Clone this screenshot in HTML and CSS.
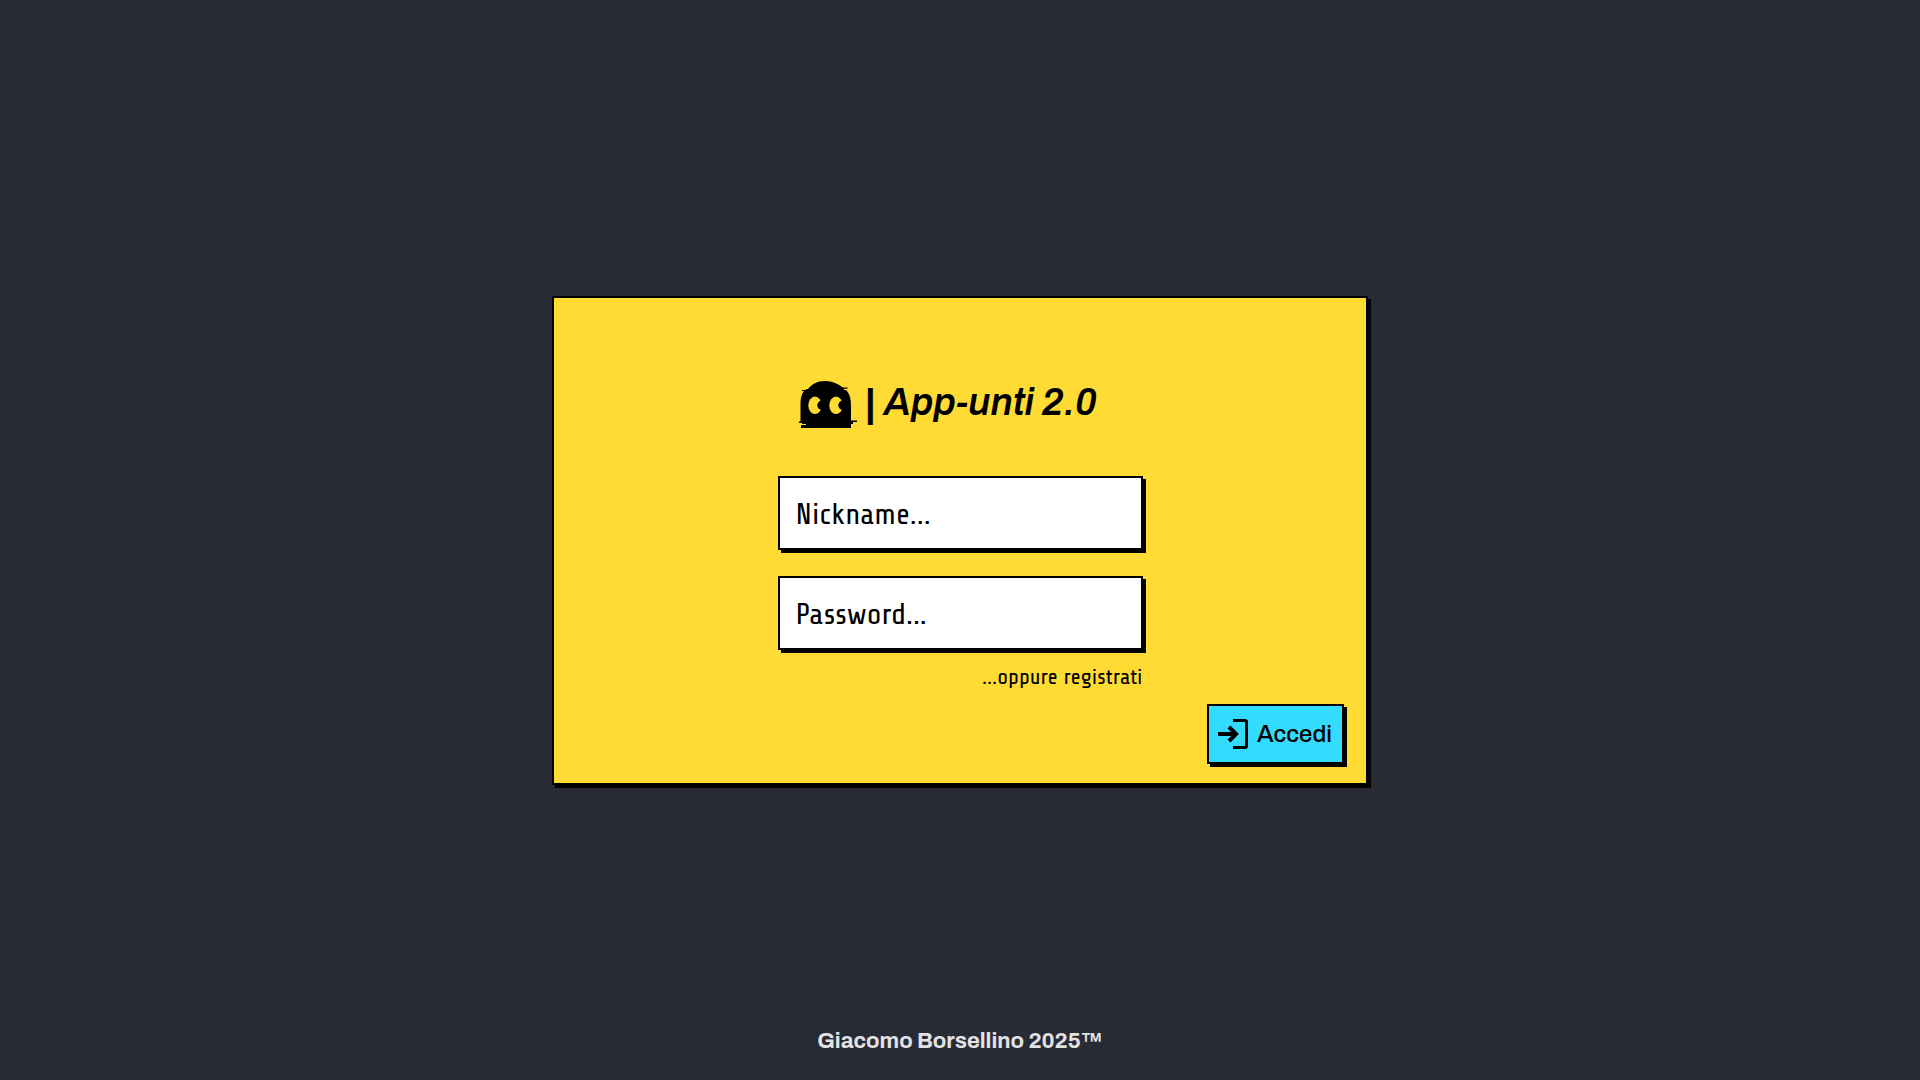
FILE: index.html
```html
<!DOCTYPE html>
<html lang="it">
<head>
<meta charset="utf-8">
<meta name="viewport" content="width=device-width, initial-scale=1">
<title>App-unti 2.0</title>
<link rel="stylesheet" href="styles.css">
</head>
<body>
<main class="stage">
  <form class="card">
    <h1 class="brand">
      <svg class="ghost" viewBox="1 0 58 48" aria-hidden="true">
        <path d="M8 8h2C14 3 19 0 27 0s13 3 18 6.500h4.500v1.200H46V9h2c4 4 5 9 5 16v14.500h6V41h-4v2h-2v4H3v-3h5v-1H4v-1H1v-1.500h1.500V25C2.500 18 3 14 6 10H4V9h4z"/>
        <g class="eye"><ellipse cx="17" cy="24.300" rx="6.700" ry="8.700"/><ellipse cx="38" cy="24.300" rx="6.700" ry="8.700"/></g>
        <circle cx="24" cy="24.300" r="4.700"/><circle cx="45" cy="24.300" r="4.700"/>
      </svg>
      <span class="divider">|</span>
      <em>App-unti 2.0</em>
    </h1>
    <div class="fields">
      <input class="field" type="text" name="nickname" placeholder="Nickname..." aria-label="Nickname" autocomplete="username">
      <input class="field" type="password" name="password" placeholder="Password..." aria-label="Password" autocomplete="current-password">
      <a class="register" href="#registrati">...oppure registrati</a>
    </div>
    <button class="submit" type="submit">
      <svg class="enter" viewBox="0 0 30 30" aria-hidden="true">
        <path d="M15 1.500h12q1.500 0 1.500 1.500v24q0 1.500-1.500 1.500H15"/>
        <path class="arrow" d="M0 15h17M11 8l7 7-7 7"/>
      </svg>
      <span>Accedi</span>
    </button>
  </form>
</main>
<footer class="footer">Giacomo Borsellino 2025™</footer>
</body>
</html>
```
FILE: styles.css
```css
* {
  box-sizing: border-box;
}

body {
  margin: 0;
  min-height: 100vh;
  display: grid;
  grid-template-rows: 1fr auto 1fr;
  background: #282a36;
  color: #000;
  font-family: Archivo, "Liberation Sans", Arial, sans-serif;
}

.stage {
  grid-row: 2;
  display: flex;
  justify-content: center;
}

.card {
  width: 42.5%;
  min-width: 440px;
  display: flex;
  flex-direction: column;
  align-items: center;
  padding: 83px 22px 19px;
  background: #ffdb33;
  border: 2px solid #000;
  box-shadow: 3px 3px 0 #000;
}

.brand {
  display: flex;
  align-items: flex-start;
  gap: 8px;
  margin: 0 24px 47px 0;
  font-size: 38px;
  line-height: 44px;
  font-weight: 600;
}

.divider {
  font-family: "Liberation Sans", Arial, sans-serif;
  font-weight: 700;
}

.ghost {
  width: 58px;
  height: 48px;
}

.eye {
  fill: #ffdb33;
}

.fields {
  width: 365px;
  display: flex;
  flex-direction: column;
  gap: 26px;
}

.field,
.register {
  color: #000;
  font-family: "Share Tech", "DejaVu Sans Condensed", sans-serif;
}

.field {
  width: 100%;
  height: 74px;
  padding: 2px 16px 0;
  border: 2px solid #000;
  border-radius: 0;
  background: #fff;
  box-shadow: 3px 3px 0 #000;
  font-size: 30px;
}

.field::placeholder {
  color: #000;
  opacity: 1;
}

.register {
  align-self: flex-end;
  margin-top: -12px;
  font-size: 22px;
  line-height: 26px;
  text-decoration: none;
}

.submit {
  align-self: flex-end;
  display: flex;
  align-items: center;
  gap: 9px;
  height: 60px;
  margin-top: 14px;
  padding: 0 10px 0 9px;
  border: 2px solid #000;
  background: #33dbff;
  box-shadow: 3px 3px 0 #000;
  color: #000;
  font-family: inherit;
  font-size: 24px;
  font-weight: 500;
}

.enter {
  width: 30px;
  height: 30px;
  fill: none;
  stroke: #000;
  stroke-width: 3;
}

.arrow {
  stroke-width: 4;
}

.footer {
  grid-row: 3;
  align-self: end;
  padding-bottom: 25px;
  color: #e2e2e2;
  font-size: 22px;
  line-height: 28px;
  font-weight: 700;
  text-align: center;
}
```
